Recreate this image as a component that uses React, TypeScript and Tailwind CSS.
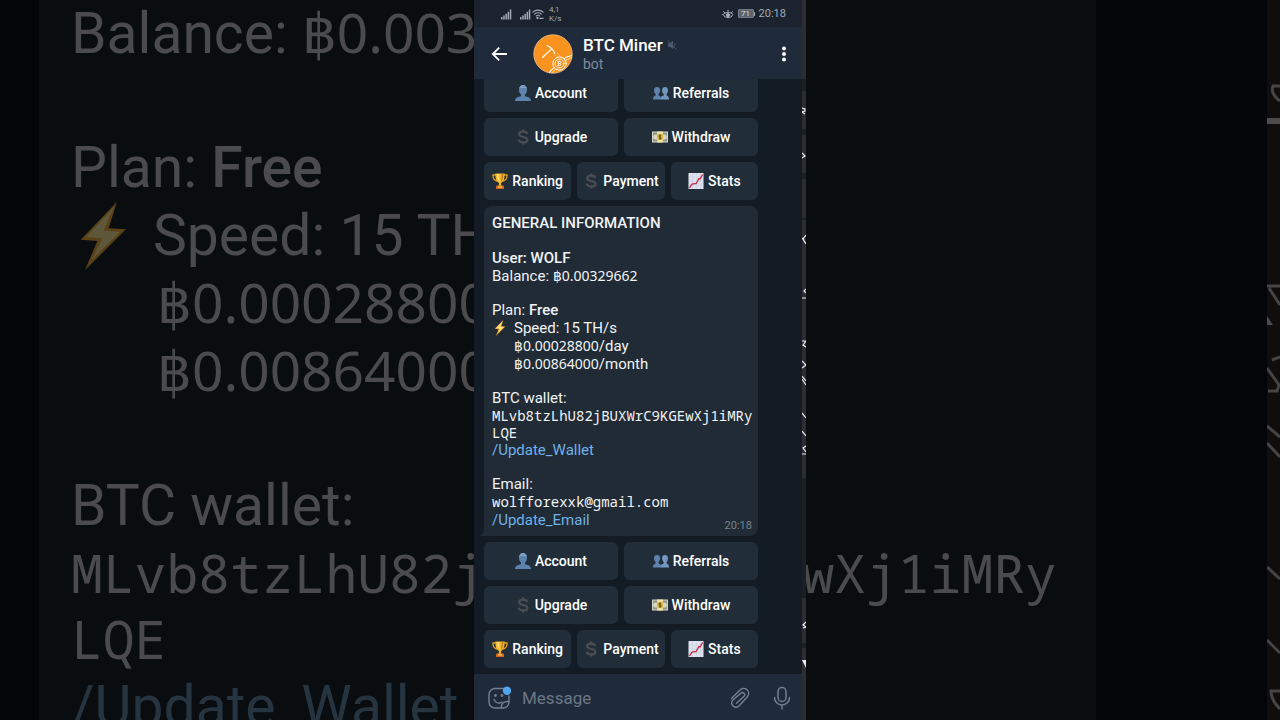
import type { ReactNode } from 'react';

function SignalIcon() {
  return (
    <svg className="h-3 w-3" viewBox="0 0 12 12" fill="#a3aab3">
      <rect x="1" y="9" width="1.5" height="2.5" />
      <rect x="3.2" y="7.5" width="1.5" height="4" />
      <rect x="5.4" y="5.8" width="1.5" height="5.7" />
      <rect x="7.6" y="3.8" width="1.5" height="7.7" />
      <rect x="9.8" y="1.5" width="1.5" height="10" />
    </svg>
  );
}

function WifiIcon() {
  return (
    <svg className="h-3 w-3" viewBox="0 0 12 12" fill="none" stroke="#a3aab3" strokeWidth="1.1" strokeLinecap="round">
      <path d="M0.8 4.2a7.6 7.6 0 0 1 10.4 0M2.6 6.2a5 5 0 0 1 6.8 0M4.3 8a2.6 2.6 0 0 1 3.4 0" />
      <circle cx="5.5" cy="10" r="0.6" fill="#a3aab3" />
      <path d="M8 10.4h3" />
    </svg>
  );
}

function EyeIcon() {
  return (
    <svg className="h-3 w-3" viewBox="0 0 12 12" fill="none" stroke="#a3aab3" strokeWidth="1" strokeLinecap="round">
      <path d="M1 6.5C3 3.8 9 3.8 11 6.5C9 10.8 3 10.8 1 6.5Z" />
      <circle cx="6" cy="7.2" r="1.7" fill="#a3aab3" />
      <path d="M1.5 3.6L2.8 4.8M6 2.2V3.8M10.5 3.6L9.2 4.8" />
    </svg>
  );
}

function StatusBar() {
  return (
    <div className="flex h-[27px] shrink-0 items-center bg-[#1b242e] pr-4 pl-[26px] text-[#a3aab3]">
      <SignalIcon />
      <span className="ml-[7px] flex items-center gap-px">
        <SignalIcon />
        <WifiIcon />
      </span>
      <span className="ml-[5px] flex flex-col text-[8px] leading-[9px]">
        <span>4,1</span>
        <span>K/s</span>
      </span>
      <span className="flex-1" />
      <EyeIcon />
      <span className="ml-1 flex items-center">
        <span className="flex h-[9px] w-4 items-center justify-center rounded-[1px] border border-[#747b84] bg-[#5d646d] text-[8px] leading-none text-[#d8dce0]">
          71
        </span>
        <span className="h-1 w-px bg-[#a3aab3]" />
      </span>
      <span className="ml-1 text-[11px] leading-none">20:18</span>
    </div>
  );
}

function Avatar() {
  return (
    <svg className="h-10 w-10 shrink-0" viewBox="0 0 40 40" fill="none">
      <circle cx="20" cy="20" r="19.2" fill="#f7931e" stroke="#f6c48a" strokeWidth="0.8" />
      <g stroke="#fff" strokeLinecap="round">
        <path d="M9.5 23.5L18.5 14.8" strokeWidth="1.1" />
        <path d="M14 11.5C17 12.5 20 15 21.8 19.5" strokeWidth="1.1" />
        <path d="M16 12.6l4 3.4" strokeWidth="0.8" />
        <path d="M24.5 19.5l.4.6M26.5 21.5l.4.2M22 21.6l.3.3" strokeWidth="0.6" />
        <path d="M16.5 38.5C18 35 19.5 34.5 21 33.8M31.5 24.5C33 22.5 35.5 22.5 38.5 21.5" strokeWidth="1.1" />
        <path d="M19 38.8L23 35M33 26.5L38.6 23.5" strokeWidth="0.7" />
        <circle cx="26.5" cy="29.5" r="6.6" strokeWidth="1" />
        <circle cx="26.5" cy="29.5" r="4.4" strokeWidth="0.8" />
        <path d="M25.4 27.3v4.4M25 27.4h1.8a1 1 0 0 1 0 2h-1.2M26.8 29.4a1.1 1.1 0 0 1 0 2.2H25" strokeWidth="0.8" />
      </g>
    </svg>
  );
}

function ChatHeader() {
  return (
    <header className="flex h-[52px] shrink-0 items-center bg-[#1f2a3a] pt-0.5 pr-2 pl-[17px]">
      <button aria-label="Back">
        <svg className="h-[18px] w-[18px]" viewBox="0 0 18 18" fill="none" stroke="#fff" strokeWidth="1.8">
          <path d="M16 9H2M8.2 2.6L1.8 9l6.4 6.4" />
        </svg>
      </button>
      <span className="ml-6">
        <Avatar />
      </span>
      <div className="ml-2.5 flex-1">
        <h1 className="flex items-center gap-1 text-[17px] leading-5 font-medium text-white">
          BTC Miner
          <svg className="h-[10px] w-[10px]" viewBox="0 0 10 10">
            <path d="M1 3.2h2L6 .8v8.4L3 6.8H1z" fill="#4c5a6b" />
            <path d="M.8 .6l8.6 8.8M7.4 3.2c.8.9.8 2 .2 3" stroke="#4c5a6b" fill="none" />
          </svg>
        </h1>
        <p className="text-sm leading-[18px] text-[#7d8a9b]">bot</p>
      </div>
      <button aria-label="More options">
        <svg className="h-5 w-5" viewBox="0 0 20 20" fill="#fff">
          <circle cx="10" cy="4.5" r="2" />
          <circle cx="10" cy="10" r="2" />
          <circle cx="10" cy="15.5" r="2" />
        </svg>
      </button>
    </header>
  );
}

function PersonIcon() {
  return (
    <svg className="h-4 w-4" viewBox="0 0 16 16">
      <path d="M0 16c0-3 2.4-4 6-4.8V9.5C4.5 8.5 4 6.5 4 4.5C4 1.5 5.8 0 8 0s4 1.5 4 4.5c0 2-.5 4-2 5v1.7c3.6.8 6 1.8 6 4.8z" fill="#5b83ae" />
      <path d="M4.2 3.8C4.4 1.3 6 0 8 0s3.6 1.3 3.8 3.8C10 2.6 6 2.6 4.2 3.8z" fill="#7d9fc4" />
    </svg>
  );
}

function PeopleIcon() {
  return (
    <svg className="h-4 w-4" viewBox="0 0 16 16">
      <path d="M7.5 14.5c0-2.7 1-3.3 3.2-3.9V9C9.5 8 9 6.8 9 5.3C9 3.2 10.2 2 12 2s3 1.2 3 3.3C15 6.8 14.5 8 13.6 9v1.6c1.6.5 2.4 1.2 2.4 3.9z" fill="#7397bd" />
      <path d="M0 14.5c0-2.7.9-3.4 2.6-3.9V9C1.6 8 1 6.8 1 5.3C1 3.2 2.2 2 4 2s3.2 1.2 3.2 3.3C7.2 6.8 6.6 8 5.6 9v1.6c1.8.5 2.9 1.2 2.9 3.9z" fill="#5b83ae" />
    </svg>
  );
}

function DollarIcon() {
  return (
    <svg className="h-4 w-4" viewBox="0 0 16 16" fill="none" stroke="#4a4d52" strokeWidth="2.2">
      <path d="M12.2 5.2C12 3.6 10.6 2.7 8.2 2.7C5.8 2.7 4.2 3.7 4.2 5.3C4.2 7 5.7 7.5 8.2 8C10.9 8.5 12.4 9.2 12.4 10.9C12.4 12.5 10.8 13.4 8.2 13.4C5.6 13.4 4 12.4 3.8 10.6" />
      <path d="M8.2 .5v3M8.2 12.8v2.7" />
    </svg>
  );
}

function BanknoteIcon() {
  return (
    <svg className="h-4 w-4" viewBox="0 0 16 16">
      <rect x="0" y="2.5" width="16" height="11" fill="#d8d9c4" />
      <rect x="1" y="3.5" width="14" height="9" fill="#8f9286" />
      <circle cx="3.8" cy="8" r="2.6" fill="#d8d9c4" />
      <circle cx="12.2" cy="8" r="2.6" fill="#d8d9c4" />
      <rect x="5.2" y="2.5" width="5.6" height="11" fill="#f3e6a4" />
      <circle cx="8" cy="8" r="3.2" fill="#e0b93c" />
      <path d="M9.3 6.7C8.7 6 6.9 6 6.9 7.1S9.3 7.9 9.3 9S7.3 10 6.7 9.3M8 5.4v5.2" stroke="#4e4620" strokeWidth=".9" fill="none" />
    </svg>
  );
}

function TrophyIcon() {
  return (
    <svg className="h-4 w-4" viewBox="0 0 16 16">
      <path d="M3.8 2H.9c0 3.5 1.3 5.5 4.3 6M12.2 2h2.9c0 3.5-1.3 5.5-4.3 6" fill="none" stroke="#e3a01f" strokeWidth="1.3" />
      <path d="M3.3 .4h9.4c0 5-1.2 8.5-3.7 9.6l.4 3H6.6l.4-3C4.5 8.9 3.3 5.4 3.3 .4z" fill="#f3b62d" />
      <path d="M5 1h2.2c0 3.5.2 6 .7 8C6 8 5 5 5 1z" fill="#fbdc6c" />
      <path d="M9.8 1h1.5c0 3.5-.7 6-2.3 7.8z" fill="#c47f12" />
      <rect x="4" y="12.4" width="8" height="3.6" rx=".6" fill="#d5641c" />
      <rect x="5.8" y="13.2" width="4.4" height="1.4" fill="#f3c34c" />
    </svg>
  );
}

function ChartIcon() {
  return (
    <svg className="h-4 w-4" viewBox="0 0 16 16">
      <rect x=".5" width="15" height="16" fill="#dfe3f0" />
      <path d="M4.5 0v16M8.5 0v16M12.5 0v16M.5 4h15M.5 8h15M.5 12h15" stroke="#c2c8dc" strokeWidth=".5" />
      <path d="M1.5 14.8L4 11.2l4.2-.7L11 5.5l1.2.3L14.6 1.5" fill="none" stroke="#c8283c" strokeWidth="1.3" />
    </svg>
  );
}

function BoltIcon({ className }: { readonly className: string }) {
  return (
    <svg className={className} viewBox="0 0 16 22">
      <path d="M12.5 0L.8 12.2l5.4.4L2.2 22L15.4 8.8l-5.6-.3z" fill="#f5a623" />
      <path d="M11.5 1.6L2.6 11.3l5.2.4L4.4 18.6L13.6 9.6l-5.4-.3z" fill="#fde08a" />
    </svg>
  );
}

interface KeyProps {
  readonly icon: ReactNode;
  readonly label: string;
}

function Key({ icon, label }: KeyProps) {
  return (
    <button className="flex h-[38px] flex-1 items-center justify-center gap-1 rounded-md bg-[#212d39] text-sm font-medium text-white">
      {icon}
      {label}
    </button>
  );
}

function Keyboard() {
  return (
    <div className="flex shrink-0 flex-col gap-1.5">
      <div className="flex gap-1.5">
        <Key icon={<PersonIcon />} label="Account" />
        <Key icon={<PeopleIcon />} label="Referrals" />
      </div>
      <div className="flex gap-1.5">
        <Key icon={<DollarIcon />} label="Upgrade" />
        <Key icon={<BanknoteIcon />} label="Withdraw" />
      </div>
      <div className="grid grid-cols-3 gap-1.5 *:whitespace-nowrap">
        <Key icon={<TrophyIcon />} label="Ranking" />
        <Key icon={<DollarIcon />} label="Payment" />
        <Key icon={<ChartIcon />} label="Stats" />
      </div>
    </div>
  );
}

function Amount({ value }: { readonly value: string }) {
  return <span className="font-['Noto_Sans',sans-serif] text-sm leading-[18px]">฿{value}</span>;
}

function Message() {
  return (
    <article className="relative shrink-0 rounded-lg rounded-bl-none bg-[#202b36] px-2 pt-2 pb-[7px] text-[15px] leading-[18px] text-[#f1f3f5]">
      <svg className="absolute bottom-0 -left-1 h-2 w-1" viewBox="0 0 4 8">
        <path d="M4 0v8H0C2.5 6.5 4 4 4 0z" fill="#202b36" />
      </svg>
      <h2 className="mb-[17px] font-medium">GENERAL INFORMATION</h2>
      <div className="mb-4">
        <p className="font-medium">User: WOLF</p>
        <p className="h-[18px]">
          Balance: <Amount value="0.00329662" />
        </p>
      </div>
      <div className="mb-4">
        <p>
          Plan: <b className="font-medium">Free</b>
        </p>
        <p className="flex items-center gap-1.5">
          <BoltIcon className="h-4 w-4" />
          Speed: 15 TH/s
        </p>
        <p className="h-[18px] pl-[22px]">
          <Amount value="0.00028800" />
          /day
        </p>
        <p className="h-[18px] pl-[22px]">
          <Amount value="0.00864000" />
          /month
        </p>
      </div>
      <div className="mb-4">
        <p>BTC wallet:</p>
        <p className="font-['Noto_Sans_Mono','DejaVu_Sans_Mono',monospace] text-sm leading-[17px]">
          MLvb8tzLhU82jBUXWrC9KGEwXj1iMRy
          <br />
          LQE
        </p>
        <a href="#wallet" className="block text-[#6fb1e8]">/Update_Wallet</a>
      </div>
      <div>
        <p>Email:</p>
        <p className="h-[18px] font-['Noto_Sans_Mono','DejaVu_Sans_Mono',monospace] text-sm leading-[18px]">
          wolfforexxk@gmail.com
        </p>
        <a href="#email" className="block text-[#6fb1e8]">/Update_Email</a>
      </div>
      <time className="absolute right-1.5 bottom-[3px] text-[11px] leading-[14px] text-[#76838f]">20:18</time>
    </article>
  );
}

function Composer() {
  return (
    <footer className="flex h-[46px] shrink-0 items-center bg-[#1f2a3b] pt-0.5 pr-2 pl-[13px]">
      <button aria-label="Stickers">
        <svg className="h-6 w-6" viewBox="0 0 24 24" fill="none" stroke="#75808f" strokeWidth="1.4" strokeLinecap="round">
          <path d="M17 2.5H8A6 6 0 0 0 2 8.5v7.5a6 6 0 0 0 6 6h7.500a6 6 0 0 0 6.500-6.500V10" />
          <path d="M14.500 21.800c-.6-4 2-6.600 7.300-6.200" />
          <path d="M7 13.500c1.500 3.600 5.500 4.500 8 2.500" />
          <circle cx="8.5" cy="9.5" r=".7" fill="#75808f" />
          <circle cx="15" cy="9.5" r=".7" fill="#75808f" />
          <circle cx="20" cy="4.8" r="4.2" fill="#4fa6ec" stroke="none" />
        </svg>
      </button>
      <input
        type="text"
        aria-label="Message"
        placeholder="Message"
        className="ml-[11px] min-w-0 flex-1 bg-transparent text-[17px] leading-6 text-white outline-none placeholder:text-[#6c7786]"
      />
      <button aria-label="Attach">
        <svg className="h-6 w-6" viewBox="0 0 24 24" fill="none" stroke="#75808f" strokeWidth="1.4" strokeLinecap="round" strokeLinejoin="round">
          <path d="M3.5 12.5L12 4a5 5 0 0 1 7.8 6.2L11 20a4.3 4.3 0 0 1-6.3-5.8L12.8 7.2a2.2 2.2 0 0 1 3.2 3.1L8.5 17.2" />
        </svg>
      </button>
      <button aria-label="Record voice message" className="ml-[18px]">
        <svg className="h-6 w-6" viewBox="0 0 24 24" fill="none" stroke="#75808f" strokeWidth="1.5" strokeLinecap="round">
          <rect x="8" y="1.5" width="8" height="14" rx="4" />
          <path d="M4.5 11.5a7.5 7.5 0 0 0 15 0M12 19v4" />
        </svg>
      </button>
    </footer>
  );
}

// Sliver of the next chat visible along the phone's right side
function EdgeSliver() {
  return (
    <svg className="h-full w-1 shrink-0" viewBox="0 0 4 720" preserveAspectRatio="none">
      <rect width="4" height="720" fill="#2b2d30" />
      <path d="M0 79h4v12H0zM0 129h4v6H0zM0 173h4v6H0zM0 218h4v2H0zM0 478h4v120H0zM0 643h4v5H0z" fill="#1a1f24" />
      <g fill="none" stroke="#f0f0f0" strokeWidth="1.2">
        <path d="M0 108l3 1v2l-3 1M0 112l3 2M0 153l3 3-3 2M4 235l-3 4 3 5M0 238l2 2M4 289l-2 2 2 2M0 298h4M0 341h4l-3 4 3 2" />
        <path d="M0 361l4 4-4 3M0 376l4 5M0 379l4 6M0 413l4 5M0 431l4 5M4 446l-3 2 3 4M0 454h4M4 622l-3 3 3 2-3 1" />
      </g>
      <path d="M0 660h4v8z" fill="#f0f0f0" />
    </svg>
  );
}

function BackdropSliver() {
  return (
    <svg className="h-full w-[13px] shrink-0" viewBox="0 0 13 720" preserveAspectRatio="none">
      <rect width="13" height="720" fill="#100e0d" />
      <g fill="none" stroke="#454545" strokeWidth="3">
        <path d="M13 86H6c-2 4 0 10 7 15M0 286h13M2 288l11 17M0 368l12 17-2 6H1M0 426l13 11M0 443l13 14M0 567l13 12M0 640l13 13M13 691H4c0 6 4 13 9 18M13 357l-8 3" />
      </g>
      <path d="M0 118h13v6H0zM0 316l6 9H0z" fill="#4b4b4b" />
    </svg>
  );
}

function Backdrop() {
  return (
    <div aria-hidden="true" className="absolute inset-0 flex overflow-hidden bg-[#020609] text-[#4b4b4d]">
      <div className="w-[39px] shrink-0" />
      <div className="flex-1 overflow-hidden bg-[#090d10] pl-8 text-[57px] leading-[68px] whitespace-nowrap">
        <p className="mb-[66px] flex h-[68px] gap-3.5">
          Balance: <span className="font-['Noto_Sans',sans-serif] text-[55px] leading-[64px]">฿0.00329662</span>
        </p>
        <p>
          Plan: <b className="font-medium">Free</b>
        </p>
        <p className="flex items-center gap-[18px]">
          <BoltIcon className="h-[68px] w-16 opacity-35" />
          Speed: 15 TH/s
        </p>
        <p className="h-[68px] pl-[86px] font-['Noto_Sans',sans-serif] text-[55px] leading-[64px]">฿0.00028800</p>
        <p className="mb-[66px] h-[68px] pl-[86px] font-['Noto_Sans',sans-serif] text-[55px] leading-[64px]">฿0.00864000</p>
        <p>BTC wallet:</p>
        <p className="h-[133px] font-['Noto_Sans_Mono','DejaVu_Sans_Mono',monospace] text-[53px] leading-[66px]">
          MLvb8tzLhU82jBUXWrC9KGEwXj1iMRy
          <br />
          LQE
        </p>
        <p className="text-[#263440]">/Update_Wallet</p>
      </div>
      <div className="w-[171px] shrink-0" />
      <BackdropSliver />
    </div>
  );
}

export default function App() {
  return (
    <div className="relative flex h-screen justify-center overflow-hidden bg-black font-[Roboto,sans-serif]">
      <Backdrop />
      <main className="relative flex h-full w-full max-w-[332px]">
        <div className="flex min-w-0 flex-1 flex-col bg-[#131c24]">
          <StatusBar />
          <ChatHeader />
          <section className="flex min-h-0 flex-1 flex-col justify-end gap-1.5 overflow-hidden pr-11 pb-1.5 pl-2.5">
            <Keyboard />
            <Message />
            <Keyboard />
          </section>
          <Composer />
        </div>
        <EdgeSliver />
      </main>
    </div>
  );
}
